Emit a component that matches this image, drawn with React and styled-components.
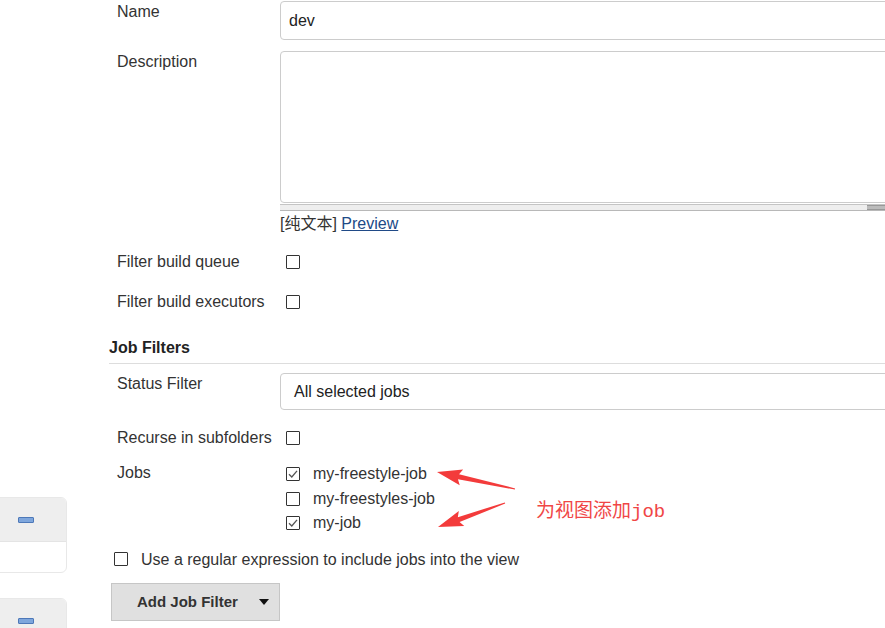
import styled, { createGlobalStyle } from "styled-components"

const GlobalStyle = createGlobalStyle`
  html, body {
    margin: 0;
    padding: 0;
    background: #fff;
    overflow: hidden;
  }
  body {
    font-family: "Liberation Sans", Arial, sans-serif;
    font-size: 16px;
    color: #333;
  }
`

const jobs = [
  { name: "my-freestyle-job", checked: true },
  { name: "my-freestyles-job", checked: false },
  { name: "my-job", checked: true },
]

// arrows of the red annotation, drawn from tail to tip
const arrows = [
  { from: [515, 489], to: [437, 472] },
  { from: [505, 503], to: [438, 527] },
]

function arrowPoints({ from, to }) {
  const dx = to[0] - from[0]
  const dy = to[1] - from[1]
  const len = Math.hypot(dx, dy)
  const ux = dx / len
  const uy = dy / len
  const nx = -uy
  const ny = ux
  const head = 22
  const at = (d, w) => [from[0] + ux * d + nx * w, from[1] + uy * d + ny * w]
  const pts = [
    at(0, 0.6),
    at(len - head, 2.6),
    at(len - head - 3, 8),
    at(len, 0),
    at(len - head - 3, -8),
    at(len - head, -2.6),
    at(0, -0.6),
  ]
  return pts.map((p) => p.join(",")).join(" ")
}

function Checkbox({ checked }) {
  return (
    <Box>
      {checked && (
        <svg width="12" height="12" viewBox="0 0 12 12">
          <path d="M2 6.2 L4.8 9 L10 2.8" fill="none" stroke="#555" strokeWidth="1.3" />
        </svg>
      )}
    </Box>
  )
}

function SideCard() {
  return (
    <Card>
      <CardTop>
        <MinusIcon />
      </CardTop>
      <CardBottom />
    </Card>
  )
}

function App() {
  return (
    <>
      <GlobalStyle />
      <Page>
        <Sidebar>
          <SideCard />
          <SideCard />
        </Sidebar>
        <Main>
          <Row $top={0}>
            <Label $pad={2}>Name</Label>
            <Field>
              <TextInput $top={1}>dev</TextInput>
            </Field>
          </Row>
          <Row $top={11}>
            <Label $pad={1}>Description</Label>
            <Field>
              <TextArea />
              <Handle>
                <Grip />
              </Handle>
              <PreviewLine>
                [纯文本] <PreviewLink href="#">Preview</PreviewLink>
              </PreviewLine>
            </Field>
          </Row>
          <Row $top={18}>
            <Label $pad={0}>Filter build queue</Label>
            <CheckField>
              <Checkbox />
            </CheckField>
          </Row>
          <Row $top={20}>
            <Label $pad={0}>Filter build executors</Label>
            <CheckField>
              <Checkbox />
            </CheckField>
          </Row>
          <SectionHeader>Job Filters</SectionHeader>
          <Row $top={9}>
            <Label $pad={1}>Status Filter</Label>
            <Field>
              <TextInput $top={0} $height={37} $pl={13}>All selected jobs</TextInput>
            </Field>
          </Row>
          <Row $top={18}>
            <Label $pad={0}>Recurse in subfolders</Label>
            <CheckField>
              <Checkbox />
            </CheckField>
          </Row>
          <Row $top={14}>
            <Label $pad={1}>Jobs</Label>
            <JobList>
              {jobs.map((j) => (
                <JobItem key={j.name}>
                  <Checkbox checked={j.checked} />
                  <span>{j.name}</span>
                </JobItem>
              ))}
            </JobList>
          </Row>
          <RegexRow>
            <Checkbox />
            <span>Use a regular expression to include jobs into the view</span>
          </RegexRow>
          <AddButton>
            Add Job Filter
            <Caret />
          </AddButton>
        </Main>
        <Annotation width="885" height="628">
          {arrows.map((a, i) => (
            <polygon key={i} points={arrowPoints(a)} fill="#f33b3b" />
          ))}
        </Annotation>
        <NoteText>为视图添加job</NoteText>
      </Page>
    </>
  )
}

const Page = styled.div`
  position: relative;
  display: flex;
  width: 885px;
  height: 628px;
  overflow: hidden;
`

const Sidebar = styled.div`
  flex: 0 0 66px;
  display: flex;
  flex-direction: column;
  gap: 25px;
  padding-top: 497px;
`

const Card = styled.div`
  flex-shrink: 0;
  margin-left: -10px;
  width: 75px;
  border: 1px solid #e8e8e8;
  border-radius: 0 6px 6px 0;
  overflow: hidden;
  background: #fff;
`

const CardTop = styled.div`
  height: 43px;
  background: #eeeeee;
  display: flex;
  align-items: center;
  padding-left: 27px;
  border-bottom: 1px solid #e4e4e4;
`

const MinusIcon = styled.div`
  width: 14px;
  height: 4px;
  background: #7ea6dc;
  border: 1px solid #4d78b8;
  border-radius: 1px;
`

const CardBottom = styled.div`
  height: 30px;
`

const Main = styled.div`
  margin-left: 42px;
  width: 820px;
  flex-shrink: 0;
  display: flex;
  flex-direction: column;
`

const Row = styled.div`
  display: flex;
  align-items: flex-start;
  margin-top: ${(p) => p.$top}px;
`

const Label = styled.div`
  flex: 0 0 171px;
  box-sizing: border-box;
  padding-left: 8px;
  padding-top: ${(p) => p.$pad}px;
  line-height: 20px;
  white-space: nowrap;
`

const Field = styled.div`
  flex: 1;
  display: flex;
  flex-direction: column;
`

const CheckField = styled.div`
  padding-left: 6px;
  height: 20px;
  display: flex;
  align-items: center;
`

const TextInput = styled.div`
  margin-top: ${(p) => p.$top}px;
  height: ${(p) => p.$height || 39}px;
  box-sizing: border-box;
  border: 1px solid #ccc;
  border-radius: 4px;
  padding-left: ${(p) => p.$pl || 8}px;
  display: flex;
  align-items: center;
  color: #222;
`

const TextArea = styled.div`
  height: 152px;
  box-sizing: border-box;
  border: 1px solid #ccc;
  border-radius: 4px;
`

const Handle = styled.div`
  margin-top: 1px;
  height: 7px;
  box-sizing: border-box;
  background: #eeeeee;
  border-top: 1px solid #c4c4c4;
  border-bottom: 1px solid #b8b8b8;
  display: flex;
  align-items: center;
  padding-left: 587px;
`

const Grip = styled.div`
  width: 22px;
  height: 3px;
  border-top: 1px solid #999;
  border-bottom: 1px solid #999;
  background: #bbb;
`

const PreviewLine = styled.div`
  margin-top: 3px;
  line-height: 20px;
  font-family: "Liberation Sans", "Noto Sans CJK SC", sans-serif;
  color: #333;
`

const PreviewLink = styled.a`
  color: #204a87;
  text-decoration: underline;
`

const Box = styled.span`
  display: inline-flex;
  align-items: center;
  justify-content: center;
  width: 14px;
  height: 14px;
  box-sizing: border-box;
  border: 1px solid #333;
  border-radius: 1px;
  background: #fff;
  flex-shrink: 0;
`

const SectionHeader = styled.div`
  margin-top: 26px;
  font-weight: bold;
  line-height: 20px;
  padding-bottom: 5px;
  border-bottom: 1px solid #dddddd;
  color: #222;
`

const JobList = styled.div`
  padding-left: 6px;
  display: flex;
  flex-direction: column;
`

const JobItem = styled.div`
  height: 24.5px;
  display: flex;
  align-items: center;
  gap: 13px;
`

const RegexRow = styled.div`
  margin-top: 12px;
  padding-left: 5px;
  height: 22px;
  display: flex;
  align-items: center;
  gap: 13px;
  span {
    padding-top: 3px;
  }
`

const AddButton = styled.div`
  margin-top: 13px;
  margin-left: 2px;
  width: 169px;
  height: 38px;
  box-sizing: border-box;
  background: #e0e0e0;
  border: 1px solid #c6c6c6;
  display: flex;
  align-items: center;
  padding: 0 10px 0 25px;
  font-weight: bold;
  font-size: 15px;
  white-space: nowrap;
  color: #333;
`

const Caret = styled.span`
  margin-left: auto;
  width: 0;
  height: 0;
  border-left: 5px solid transparent;
  border-right: 5px solid transparent;
  border-top: 6px solid #111;
`

const Annotation = styled.svg`
  position: absolute;
  left: 0;
  top: 0;
  pointer-events: none;
`

const NoteText = styled.div`
  position: absolute;
  left: 536px;
  top: 499px;
  font-family: "Liberation Mono", "Noto Sans CJK SC", monospace;
  font-size: 19px;
  line-height: 26px;
  color: #f04646;
`

export default App
